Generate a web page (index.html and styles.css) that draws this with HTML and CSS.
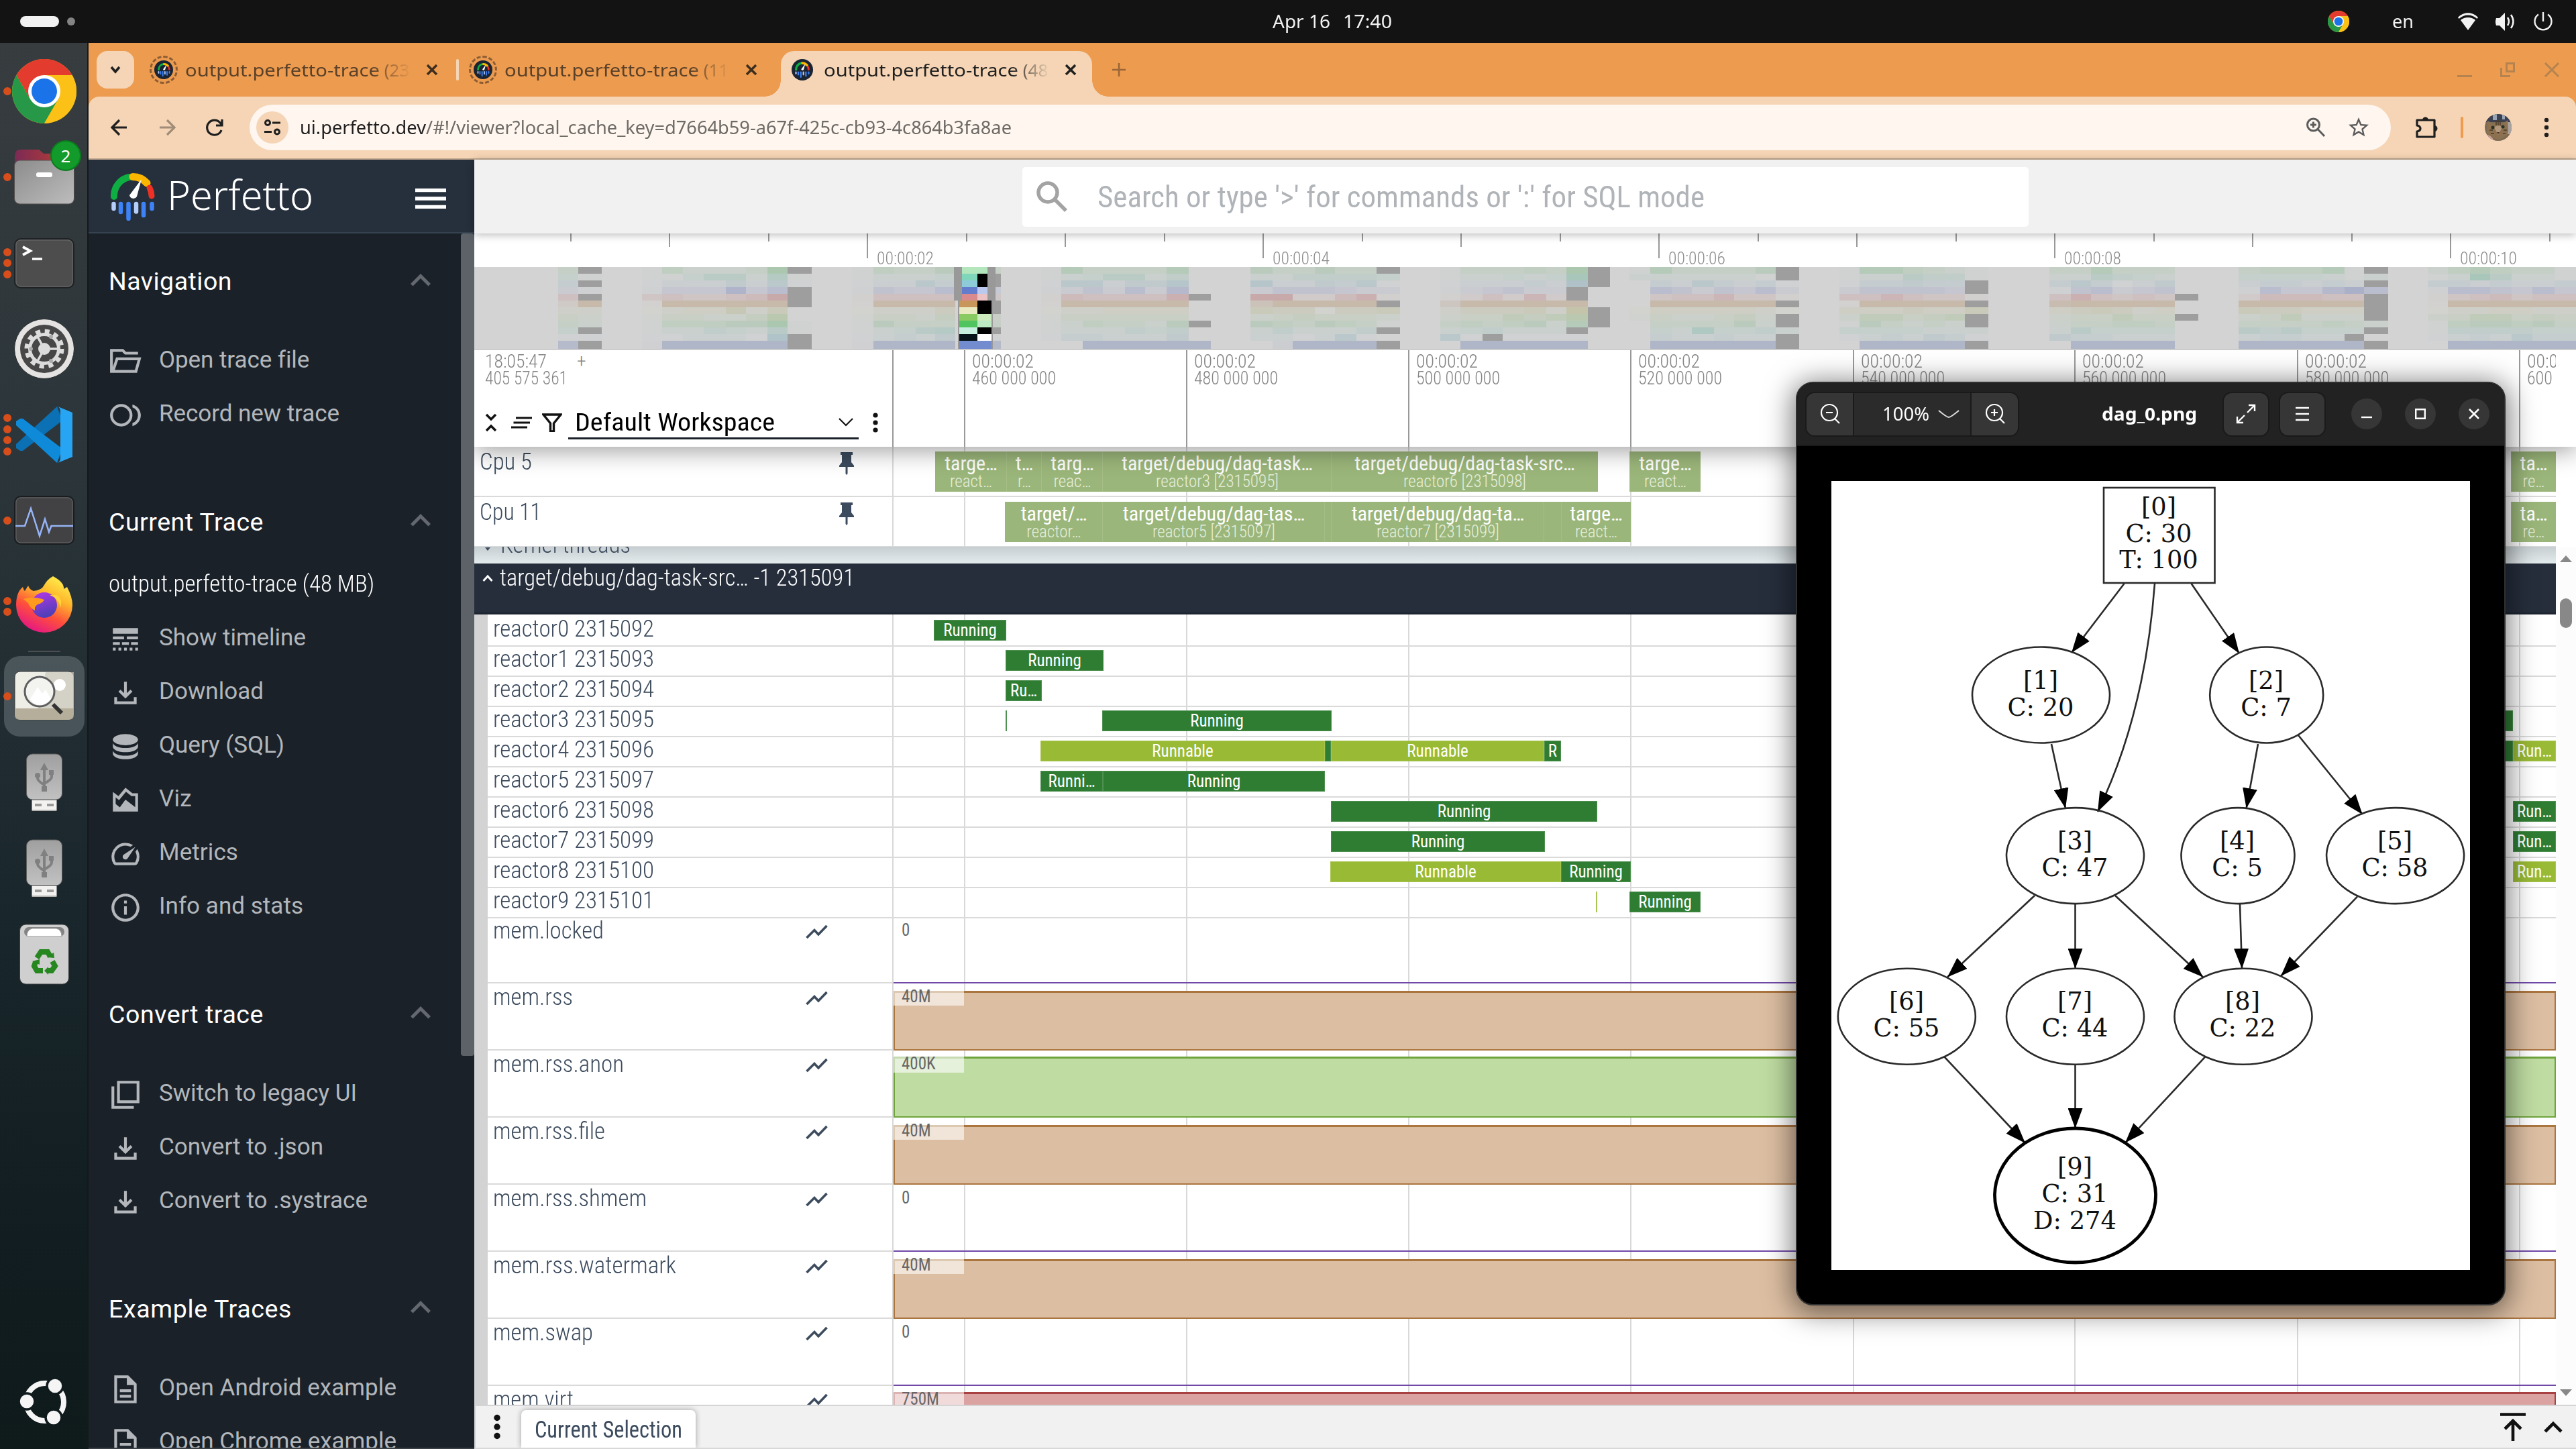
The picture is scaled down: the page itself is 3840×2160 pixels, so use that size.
FILE: index.html
```html
<!DOCTYPE html>
<html lang="en">
<head>
<meta charset="utf-8">
<title>Perfetto UI</title>
<link rel="stylesheet" href="styles.css">
</head>
<body>
<svg class="defs" width="0" height="0">
  <defs>
    <symbol id="chrome" viewBox="0 0 96 96">
      <circle cx="48" cy="48" r="48" fill="#fbc116"/>
      <path d="M48 24H89.6A48 48 0 0 0 6.4 24L27.2 60Z" fill="#e33b2e"/>
      <path d="M6.4 24L27.2 60L48 72L68.8 60L48 96A48 48 0 0 1 6.4 24Z" fill="#279847"/>
      <path d="M48 96L68.8 60L48 24H89.6A48 48 0 0 1 48 96Z" fill="#fbc116"/>
      <circle cx="48" cy="48" r="24" fill="#fff"/><circle cx="48" cy="48" r="19" fill="#1a73e8"/>
    </symbol>
    <symbol id="gauge" viewBox="0 0 66 71">
      <path d="M5 35V33A28 28 0 0 1 28 6" fill="none" stroke="#0fae43" stroke-width="10" stroke-linecap="round"/>
      <path d="M33 5.500A28 28 0 0 1 54 15" fill="none" stroke="#fdb600" stroke-width="11" stroke-linecap="round"/>
      <path d="M58 22A28 28 0 0 1 61 34" fill="none" stroke="#ee3124" stroke-width="9" stroke-linecap="round"/>
      <path d="M46 9L39 35A6 6 0 0 1 28 33Z" fill="#fff"/>
      <g stroke-width="6.500" stroke-linecap="round"><path d="M4.500 46V53M38 46V57.500" stroke="#b4cdfb"/><path d="M15 46V58M26.500 46V68M49 46V63M61.500 46V53" stroke="#3d83f7"/></g>
    </symbol>
    <symbol id="up" viewBox="0 0 24 24"><path d="M12 8l-6 6 1.410 1.410L12 10.830l4.590 4.580L18 14z"/></symbol>
    <symbol id="close" viewBox="0 0 24 24"><path d="M5 5L19 19M19 5L5 19" stroke="currentColor" stroke-width="3.400"/></symbol>
    <symbol id="folder" viewBox="0 0 24 24"><path d="M2 20V4h8l2 2h9M3 19L6 10h16l-2.500 9H3" fill="none" stroke="currentColor" stroke-width="2"/></symbol>
    <symbol id="record" viewBox="0 0 24 24"><circle cx="9" cy="12" r="7" fill="none" stroke="currentColor" stroke-width="2"/><path d="M17 4.260v2.090a5.990 5.990 0 0 1 0 11.300v2.090c3.450-.890 6-4.010 6-7.740s-2.550-6.850-6-7.740z"/></symbol>
    <symbol id="timeline" viewBox="0 0 24 24"><path d="M3 16h5v-2H3v2zm6.500 0h5v-2h-5v2zm6.500 0h5v-2h-5v2zM3 20h2v-2H3v2zm4 0h2v-2H7v2zm4 0h2v-2h-2v2zm4 0h2v-2h-2v2zm4 0h2v-2h-2v2zM3 12h8v-2H3v2zm10 0h8v-2h-8v2zM3 4v4h18V4H3z"/></symbol>
    <symbol id="download" viewBox="0 0 24 24"><path d="M18 15v3H6v-3H4v5h16v-5h-2zm-1-4-1.410-1.410L13 12.170V4h-2v8.170L8.410 9.590 7 11l5 5 5-5z"/></symbol>
    <symbol id="db" viewBox="0 0 24 24"><ellipse cx="12" cy="7" rx="9" ry="4"/><path d="M3 9v3c0 2.200 4 4 9 4s9-1.800 9-4V9c0 2.200-4 4-9 4S3 11.200 3 9zM3 14.500v2.500c0 2.200 4 4 9 4s9-1.800 9-4v-2.500c0 2.200-4 4-9 4s-9-1.800-9-4z"/></symbol>
    <symbol id="viz" viewBox="0 0 24 24"><path d="M17 7l-5-4-5 6-4-3v14h18V7h-4zm2 9.950-7-5.450L8 17l-3-2.400V10l2.440 1.830 4.960-5.950L16.300 9H19v7.950z"/></symbol>
    <symbol id="metrics" viewBox="0 0 24 24"><path d="M20.380 8.570l-1.230 1.850a8 8 0 0 1-.22 7.580H5.070A8 8 0 0 1 15.580 6.850l1.850-1.230A10 10 0 0 0 3.350 19a2 2 0 0 0 1.720 1h13.850a2 2 0 0 0 1.740-1 10 10 0 0 0-.27-10.440zm-9.790 6.840a2 2 0 0 0 2.830 0l5.660-8.490-8.490 5.660a2 2 0 0 0 0 2.830z"/></symbol>
    <symbol id="info" viewBox="0 0 24 24"><path d="M11 7h2v2h-2zm0 4h2v6h-2zm1-9C6.480 2 2 6.480 2 12s4.480 10 10 10 10-4.480 10-10S17.520 2 12 2zm0 18c-4.410 0-8-3.590-8-8s3.590-8 8-8 8 3.590 8 8-3.590 8-8 8z"/></symbol>
    <symbol id="legacy" viewBox="0 0 24 24"><path d="M4 6H2v16h16v-2H4V6zm2-4v16h16V2H6zm14 14H8V4h12v12z"/></symbol>
    <symbol id="doc" viewBox="0 0 24 24"><path d="M8 16h8v2H8zm0-4h8v2H8zm6-10H4v20h16V8l-6-6zm4 18H6V4h7v5h5v11z"/></symbol>
    <symbol id="usb" viewBox="0 0 96 96">
      <rect x="29" y="74" width="38" height="17" fill="#f3f2f1" stroke="#23292b"/><path d="M34 82h10M52 82h10" stroke="#999" stroke-width="4"/><path d="M30 90H66" stroke="#b5b3b0" stroke-width="2"/>
      <rect x="21.500" y="6" width="53" height="68" rx="9" fill="url(#usbg)" stroke="#60605f"/>
      <g fill="none" stroke="#808080" stroke-width="4"><path d="M48 28V58"/><path d="M38 38V42Q38 46 48 52M59 34V40Q59 44 48 50"/></g>
      <path d="M48 19L54 30H42Z" fill="#808080"/><circle cx="38" cy="38" r="4" fill="#808080"/><path d="M55 30h7v7h-7zM44 54h8v8h-8z" fill="#808080"/>
    </symbol>
    <linearGradient id="usbg" x2="0" y2="1"><stop stop-color="#9f9f9f"/><stop offset="1" stop-color="#c1c1c1"/></linearGradient>
    <linearGradient id="ffo" x1=".8" y1="0" x2=".3" y2="1"><stop stop-color="#fff44f"/><stop offset=".35" stop-color="#ffb52b"/><stop offset=".65" stop-color="#ff4f3c"/><stop offset="1" stop-color="#e31587"/></linearGradient>
    <linearGradient id="ffp" x2=".3" y2="1"><stop stop-color="#b636e8"/><stop offset="1" stop-color="#4f3fb8"/></linearGradient>
    <linearGradient id="files" x2="1" y2="1"><stop stop-color="#8c8c8c"/><stop offset="1" stop-color="#bdbdbd"/></linearGradient>
    <linearGradient id="filesback" x2="1"><stop stop-color="#7b2a55"/><stop offset="1" stop-color="#c3402f"/></linearGradient>
    <marker id="tip" viewBox="0 0 30 22" refX="30" refY="11" markerWidth="30" markerHeight="22" markerUnits="userSpaceOnUse" orient="auto"><path d="M0 0L30 11L0 22Z"/></marker>
  </defs>
</svg>

<header class="topbar">
  <span class="pill"></span><span class="wsdot"></span>
  <span class="clock"><span data-w="86">Apr 16</span><span data-w="73">17:40</span></span>
  <span class="tray">
    <svg width="32" height="32"><use href="#chrome"/></svg>
    <span class="lang" data-w="32">en</span>
    <svg width="32" height="32" viewBox="0 0 32 32" fill="#f2f2f2"><path d="M1 10C9 1 23 1 31 10L29.500 12C22 4.500 10 4.500 2.500 12Z"/><path d="M5 14C11 8.500 21 8.500 27 14L16 29Z"/></svg>
    <svg width="32" height="32" viewBox="0 0 32 32" fill="#f2f2f2"><path d="M2 11h5l8-8v27l-8-8H2q-2-5.500 0-11z"/><path d="M19 10q4 6 0 12M24 6q7 10 0 20" fill="none" stroke="#f2f2f2" stroke-width="2.500"/></svg>
    <svg width="32" height="32" viewBox="0 0 32 32" fill="none" stroke="#f2f2f2" stroke-width="2.400"><path d="M16 2V16M9 5.500a12.500 12.500 0 1 0 14 0"/></svg>
  </span>
</header>

<div class="desktop">
  <nav class="dock">
    <div class="app"><i class="dots"><b></b></i><svg width="96" height="96"><use href="#chrome"/></svg></div>
    <div class="app"><i class="dots"><b></b></i>
      <svg width="96" height="96" viewBox="0 0 96 96"><path d="M4 20q0-13 7-13H40l7 6H84q7 0 7 7V50H4Z" fill="url(#filesback)"/><rect x="3.500" y="23" width="89" height="65" rx="8" fill="url(#files)" stroke="#55504f"/><rect x="36" y="41" width="24" height="7" rx="3" fill="#fff"/></svg>
      <span class="badge">2</span></div>
    <div class="app"><i class="dots"><b></b><b></b><b></b></i>
      <svg width="96" height="96" viewBox="0 0 96 96"><rect x="4" y="12" width="88" height="73" rx="9" fill="#4d4d4d" stroke="#1e2224" stroke-width="2"/><rect x="6" y="14" width="84" height="69" rx="7" fill="none" stroke="#6b6b6b"/><path d="M16 24L27 30L16 36" fill="none" stroke="#fff" stroke-width="4"/><path d="M30 42H45" stroke="#fff" stroke-width="3.500"/></svg></div>
    <div class="app"><i class="dots"></i>
      <svg width="96" height="96" viewBox="0 0 96 96"><circle cx="48" cy="48" r="44.500" fill="#e4e3e2" stroke="#22282a"/><circle cx="48" cy="48" r="36" fill="#474747"/><circle cx="48" cy="48" r="26" fill="none" stroke="#dcdcdc" stroke-width="7" stroke-dasharray="7 6.610"/><circle cx="48" cy="48" r="21.500" fill="none" stroke="#dcdcdc" stroke-width="5"/><circle cx="48" cy="48" r="9" fill="#dcdcdc"/><path d="M48 48H68M48 48L38 30M48 48L38 66" stroke="#dcdcdc" stroke-width="3.500"/><g fill="#ababab"><circle cx="58" cy="30" r="3"/><circle cx="58" cy="66" r="3"/><circle cx="28" cy="48" r="3"/></g></svg></div>
    <div class="app"><i class="dots"><b></b><b></b><b></b><b></b></i>
      <svg width="96" height="96" viewBox="0 0 96 96"><path d="M67 6L6 62v6l6 4h4L75 27Z" fill="#0b70b4"/><path d="M67 90L6 34v-6l6-4h4L75 69Z" fill="#0f8ad8"/><path d="M68 6L90 15V81L68 90Q72 88 72 83V13Q72 8 68 6Z" fill="#27a5f2"/></svg></div>
    <div class="app"><i class="dots"><b></b></i>
      <svg width="96" height="96" viewBox="0 0 96 96"><rect x="4" y="12" width="88" height="71" rx="9" fill="#424244" stroke="#191d1f" stroke-width="2"/><rect x="6" y="14" width="84" height="67" rx="7" fill="none" stroke="#666"/><path d="M5 56H19L28 30L41 71L49 46L55 65L58.500 56H91" fill="none" stroke="#96b3f5" stroke-width="2.500"/></svg></div>
    <div class="app"><i class="dots"><b></b><b></b></i>
      <svg width="96" height="96" viewBox="0 0 96 96"><path d="M61 3Q78 12 77 22L82 19Q90 34 90 46A42 41 0 0 1 6 46Q6 27 16 19Q17 23 19 25L24 17Q26 23 32 25Q44 24 48 16Q52 8 61 3Z" fill="url(#ffo)"/><circle cx="48" cy="46" r="19" fill="url(#ffp)"/><path d="M17 37Q30 32 48 38Q46 43 38 45Q33 48 34 54Q26 50 24 43Z" fill="#ff9a1f"/><path d="M56 31Q70 36 72 50Q76 36 66 31Z" fill="#ffd43a"/></svg></div>
    <hr>
    <div class="app active"><i class="dots"><b></b></i>
      <svg width="96" height="96" viewBox="0 0 96 96"><rect x="4" y="11" width="88" height="72" rx="8" fill="#efeee6" stroke="#3a3a38"/><path d="M50 12H92V68L60 68L38 68Z" fill="#c9c5b8" opacity=".7"/><path d="M4 66H92V75Q92 83 84 83H12Q4 83 4 75Z" fill="#b5ae9a"/><circle cx="71" cy="31" r="9" fill="#fff"/><circle cx="41" cy="41" r="22" fill="#f3f3f0" stroke="#5f5f5f" stroke-width="3"/><path d="M27 52L38 34L45 44L50 38L58 52Q41 70 27 52Z" fill="#fff"/><path d="M61 60L74 73" stroke="#333" stroke-width="6"/></svg></div>
    <div class="app"><i class="dots"></i><svg width="96" height="96"><use href="#usb"/></svg></div>
    <div class="app"><i class="dots"></i><svg width="96" height="96"><use href="#usb"/></svg></div>
    <div class="app"><i class="dots"></i>
      <svg width="96" height="96" viewBox="0 0 96 96"><rect x="11.500" y="4" width="73" height="89" rx="9" fill="#cfcfcf" stroke="#3a3f40"/><rect x="18" y="8" width="60" height="14" rx="7" fill="#848484"/><path d="M22 22Q22 12 30 10H66Q74 12 74 22Z" fill="#fff" stroke="#999"/><g fill="none" stroke="#26861f" stroke-width="8"><path d="M37 54L43 45H53L57 52"/><path d="M35 60L33 66L37 73H46"/><path d="M52 73H59L64 66L60 59"/></g><path d="M52 53L63 54L62 46ZM30 59L41 64V56ZM54 67V79L48 73Z" fill="#26861f"/></svg></div>
    <div class="spacer"></div>
    <svg class="ubuntu" width="72" height="72" viewBox="0 0 72 72"><circle cx="38" cy="36" r="28" fill="none" stroke="#f5f5f5" stroke-width="8"/><g fill="#f5f5f5" stroke="#0f1a1c" stroke-width="3.500"><circle cx="53" cy="12" r="12"/><circle cx="11" cy="35" r="12"/><circle cx="51" cy="59" r="12"/></g></svg>
  </nav>

  <div class="browser">
    <div class="tabs">
      <button class="tabsearch"><svg width="16" height="12" viewBox="0 0 16 12"><path d="M2 2L8 9L14 2" fill="none" stroke="#1f1f1f" stroke-width="3.600"/></svg></button>
      <div class="tab"><span class="fav ring"><svg width="19" height="20"><use href="#gauge"/></svg></span><span class="title"><span data-w="290">output.perfetto-trace</span>&nbsp;(23</span><svg class="x" width="24" height="24"><use href="#close"/></svg></div>
      <i class="tabsep"></i>
      <div class="tab"><span class="fav ring"><svg width="19" height="20"><use href="#gauge"/></svg></span><span class="title"><span data-w="290">output.perfetto-trace</span>&nbsp;(11</span><svg class="x" width="24" height="24"><use href="#close"/></svg></div>
      <div class="tab current"><span class="fav"><svg width="22" height="24"><use href="#gauge"/></svg></span><span class="title"><span data-w="290">output.perfetto-trace</span>&nbsp;(48</span><svg class="x" width="24" height="24"><use href="#close"/></svg></div>
      <svg class="plus" width="22" height="22" viewBox="0 0 22 22"><path d="M11 1V21M1 11H21" stroke="#9a6636" stroke-width="2.600"/></svg>
      <svg class="winctl" width="152" height="22" viewBox="0 0 152 22" fill="none" stroke="#b48350" stroke-width="3"><path d="M0 20.500H22M65.500 8V20.500H79M73.500 1.500H84.500V13.500H73.500ZM131 1L151 21M151 1L131 21"/></svg>
    </div>
    <div class="toolbar">
      <svg width="72" height="40" viewBox="0 0 72 40" fill="none" stroke="#1f1f1f" stroke-width="3.200"><path d="M49 20H28M38 9L27 20L38 31"/></svg>
      <svg width="72" height="40" viewBox="0 0 72 40" fill="none" stroke="#a08c78" stroke-width="3.200"><path d="M26 20H47M37 9L48 20L37 31"/></svg>
      <svg width="72" height="40" viewBox="0 0 72 40" fill="none" stroke="#1f1f1f" stroke-width="3.200"><path d="M46 24A11 11 0 1 1 44 13L47 16M47 8V17H38"/></svg>
      <div class="omnibox">
        <span class="site"><svg width="28" height="24" viewBox="0 0 28 24" fill="none" stroke="#1f1f1f" stroke-width="3"><circle cx="7" cy="5" r="3.500"/><path d="M14 5H26M2 18.500H13"/><circle cx="21" cy="18.500" r="3.500"/></svg></span>
        <span class="url"><span class="host" data-w="188">ui.perfetto.dev</span><span data-w="873">/#!/viewer?local_cache_key=d7664b59-a67f-425c-cb93-4c864b3fa8ae</span></span>
        <svg width="30" height="30" viewBox="0 0 30 30" fill="none" stroke="#5c5c5c" stroke-width="3"><circle cx="11.500" cy="11" r="9"/><path d="M18 17.500L28 28M11.500 6.500V15.500M7 11H16"/></svg>
        <svg class="star" width="36" height="36" viewBox="0 0 24 24" fill="#5c5c5c"><path d="M22 9.240l-7.190-.62L12 2 9.190 8.630 2 9.240l5.460 4.730L5.820 21 12 17.270 18.180 21l-1.630-7.030L22 9.240zM12 15.400l-3.760 2.270 1-4.280-3.320-2.880 4.380-.38L12 6.100l1.710 4.040 4.380.38-3.320 2.880 1 4.280L12 15.400z"/></svg>
      </div>
      <svg class="ext" width="34" height="34" viewBox="0 0 34 34"><path d="M3 6H29V31H3V23Q8 22 8 18.500T3 14Z" fill="none" stroke="#1f1f1f" stroke-width="3.200" stroke-linejoin="round"/><path d="M11 6a4.500 4.500 0 0 1 9 0M29 14a4.500 4.500 0 0 1 0 9" fill="#1f1f1f"/></svg>
      <i class="tbsep"></i>
      <svg class="avatar" width="40" height="40" viewBox="0 0 40 40"><clipPath id="av"><circle cx="20" cy="20" r="20"/></clipPath><g clip-path="url(#av)"><rect width="40" height="40" fill="#7d6a55"/><path d="M0 0H40V12H0Z" fill="#3b4150"/><path d="M12 0h6v9h-6zM26 0h4v8h-4z" fill="#9aa4b8"/><path d="M30 12h10v18h-8z" fill="#a9a3a0"/><path d="M3 28L4 10L12 14H27L34 9L35 26Q34 34 20 38Q6 34 3 28Z" fill="#8b7150"/><path d="M14 20L20 31L26 20Q20 14 14 20Z" fill="#b3977a"/><path d="M0 30Q10 31 14 40H0Z" fill="#c9a39b"/><circle cx="12" cy="20" r="2.500" fill="#2a3325"/><circle cx="27" cy="19" r="2.500" fill="#2a3325"/><path d="M18 27h4l-2 3z" fill="#4d3327"/><path d="M17 10V17M20 9V17M23 10V17M7 24H12M28 24H33M9 29H14M27 29H31" stroke="#4b3d2b" stroke-width="1.500"/></g></svg>
      <svg class="more" width="8" height="30" viewBox="0 0 8 30" fill="#1f1f1f"><circle cx="4" cy="4" r="3.200"/><circle cx="4" cy="15" r="3.200"/><circle cx="4" cy="26" r="3.200"/></svg>
    </div>

    <div class="page">
      <aside class="sidebar">
        <div class="brand"><svg width="66" height="71"><use href="#gauge"/></svg><span class="name" data-w="218">Perfetto</span><svg class="burger" width="46" height="30" viewBox="0 0 46 30"><path d="M0 2.500H46M0 15H46M0 27.500H46" stroke="#fff" stroke-width="5.300"/></svg></div>
        <div class="menu">
          <div class="items">
            <h2 class="first"><span data-ls="184">Navigation</span><svg><use href="#up"/></svg></h2>
            <a><svg><use href="#folder"/></svg><span data-ls="223">Open trace file</span></a>
            <a><svg><use href="#record"/></svg><span data-ls="269">Record new trace</span></a>
            <h2><span data-ls="231">Current Trace</span><svg><use href="#up"/></svg></h2>
            <p><span data-w="396">output.perfetto-trace (48 MB)</span></p>
            <a><svg><use href="#timeline"/></svg><span data-ls="219">Show timeline</span></a>
            <a><svg><use href="#download"/></svg><span data-ls="156">Download</span></a>
            <a><svg><use href="#db"/></svg><span data-ls="187">Query (SQL)</span></a>
            <a><svg><use href="#viz"/></svg><span data-ls="49">Viz</span></a>
            <a><svg><use href="#metrics"/></svg><span data-ls="118">Metrics</span></a>
            <a><svg><use href="#info"/></svg><span data-ls="215">Info and stats</span></a>
            <h2><span data-ls="231">Convert trace</span><svg><use href="#up"/></svg></h2>
            <a><svg><use href="#legacy"/></svg><span data-ls="295">Switch to legacy UI</span></a>
            <a><svg><use href="#download"/></svg><span data-ls="245">Convert to .json</span></a>
            <a><svg><use href="#download"/></svg><span data-ls="311">Convert to .systrace</span></a>
            <h2><span data-ls="273">Example Traces</span><svg><use href="#up"/></svg></h2>
            <a><svg><use href="#doc"/></svg><span data-ls="354">Open Android example</span></a>
            <a><svg><use href="#doc"/></svg><span data-ls="354">Open Chrome example</span></a>
          </div>
          <i class="thumb"></i>
        </div>
      </aside>

      <main>
        <div class="search"><div class="box"><svg width="48" height="48" viewBox="0 0 48 48" fill="none" stroke="#a3a3a3" stroke-width="5.500"><circle cx="17" cy="17" r="14"/><path d="M27 27L44 44"/></svg><span data-w="905">Search or type '&gt;' for commands or ':' for SQL mode</span></div></div>
        <div class="overview"><div class="ticks" id="ticks"></div><div class="heat" id="heat"></div></div>
        <div class="axis">
          <div class="shellhead">
            <div class="origin"><span><span data-w="92">18:05:47</span><em>+</em></span><span data-w="123">405 575 361</span></div>
            <div class="controls">
              <svg width="18" height="28" viewBox="0 0 18 28" fill="none" stroke="#111" stroke-width="3.400"><path d="M2 2L9 9L16 2M2 26L9 19L16 26"/></svg>
              <svg class="lines" width="32" height="18" viewBox="0 0 32 18" stroke="#111" stroke-width="3.200"><path d="M7 2H31M3.500 9H28M0 16H24"/></svg>
              <svg class="funnel" width="30" height="28" viewBox="0 0 30 28"><path d="M2 2H28L17.500 15V27H12.500V15Z" fill="none" stroke="#111" stroke-width="3.400"/></svg>
              <span class="select"><span data-w="298">Default Workspace</span><svg width="22" height="14" viewBox="0 0 22 14"><path d="M1 2L11 12L21 2" fill="none" stroke="#111" stroke-width="2.200"/></svg></span>
              <svg class="kebab" width="8" height="30" viewBox="0 0 8 30" fill="#111"><circle cx="4" cy="4" r="3.600"/><circle cx="4" cy="15" r="3.600"/><circle cx="4" cy="26" r="3.600"/></svg>
            </div>
          </div>
          <div class="labels" id="axis"></div>
        </div>
        <div class="pinned" id="pinned"></div>
        <div class="scroller">
          <div class="tracks" id="tracks"></div>
          <div class="scrollbar"><svg width="20" height="12" viewBox="0 0 20 12"><path d="M1 11L10 1L19 11Z" fill="#888"/></svg><i></i><svg width="20" height="12" viewBox="0 0 20 12"><path d="M1 1L10 11L19 1Z" fill="#888"/></svg></div>
        </div>
        <div class="drawer">
          <svg width="10" height="38" viewBox="0 0 10 38" fill="#111"><circle cx="5" cy="5.500" r="4.700"/><circle cx="5" cy="19" r="4.700"/><circle cx="5" cy="32.500" r="4.700"/></svg>
          <span class="dtab"><span data-w="220">Current Selection</span></span>
          <svg class="totop" width="38" height="42" viewBox="0 0 38 42" fill="none" stroke="#111" stroke-width="4.600"><path d="M0 2.500H38M19 42V13M7 24L19 12L31 24"/></svg>
          <svg width="28" height="18" viewBox="0 0 28 18"><path d="M2 16L14 4L26 16" fill="none" stroke="#111" stroke-width="4.600"/></svg>
        </div>
      </main>
    </div>
  </div>
</div>

<section class="viewer">
  <div class="vhead">
    <div class="zoomgroup">
      <span class="zb"><svg width="32" height="32" viewBox="0 0 32 32" fill="none" stroke="#fff" stroke-width="2.200"><circle cx="15" cy="14" r="12"/><path d="M23 23L30 30M10 14H20"/></svg></span>
      <span class="pct"><span data-w="70">100%</span><svg width="32" height="14" viewBox="0 0 32 14"><path d="M1 2Q13 12 16 12T31 2" fill="none" stroke="#ddd" stroke-width="2"/></svg></span>
      <span class="zb"><svg width="32" height="32" viewBox="0 0 32 32" fill="none" stroke="#fff" stroke-width="2.200"><circle cx="15" cy="14" r="12"/><path d="M23 23L30 30M10 14H20M15 9V19"/></svg></span>
    </div>
    <span class="vtitle"><span data-w="142">dag_0.png</span></span>
    <span class="vb"><svg width="30" height="30" viewBox="0 0 30 30" fill="none" stroke="#fff" stroke-width="2.400"><path d="M17 13L28 2M19 2H28V11M13 17L2 28M2 19V28H11"/></svg></span>
    <span class="vb"><svg width="22" height="22" viewBox="0 0 22 22" stroke="#fff" stroke-width="2.600"><path d="M1 2H21M1 11H21M1 20H21"/></svg></span>
    <span class="vc first"><svg width="16" height="16" viewBox="0 0 16 16" stroke="#fff" stroke-width="2.400"><path d="M0 13H16"/></svg></span>
    <span class="vc"><svg width="16" height="16" viewBox="0 0 16 16" fill="none" stroke="#fff" stroke-width="2.400"><path d="M1.200 1.200H14.800V14.800H1.200Z"/></svg></span>
    <span class="vc"><svg width="18" height="18" viewBox="0 0 18 18" stroke="#fff" stroke-width="2.600"><path d="M2 2L16 16M16 2L2 16"/></svg></span>
  </div>
  <svg class="dag" width="952" height="1176" viewBox="2730 717 952 1176">
    <g fill="none" stroke="#2a2a2a" stroke-width="2.600" id="edges">
      <path d="M3166.500 870L3088 973"/><path d="M3266.600 870L3338 974"/><path d="M3212 870C3206 950 3190 1080 3127 1210"/>
      <path d="M3058 1109L3079 1205"/><path d="M3366 1109L3348.600 1205"/><path d="M3426 1096L3521.700 1214"/>
      <path d="M3033 1335L2903 1456.500"/><path d="M3093.500 1347V1444"/><path d="M3153 1335L3284 1456.500"/><path d="M3339 1348L3342 1444"/><path d="M3514 1336.600L3400 1455"/>
      <path d="M2898.600 1575.600L3019 1704"/><path d="M3093.500 1587V1682"/><path d="M3287 1575.600L3168 1703.600"/>
    </g>
    <g fill="none" stroke="#2a2a2a" stroke-width="2.600">
      <rect x="3136" y="727" width="165.500" height="142"/>
      <ellipse cx="3042.500" cy="1036" rx="102.500" ry="71.500"/><ellipse cx="3378.700" cy="1036" rx="84.500" ry="71.500"/>
      <ellipse cx="3093.500" cy="1275.600" rx="102.500" ry="71.500"/><ellipse cx="3336" cy="1275.600" rx="84.500" ry="71.500"/><ellipse cx="3570.600" cy="1275.600" rx="102.500" ry="71.500"/>
      <ellipse cx="2842.300" cy="1515.300" rx="102.500" ry="71.500"/><ellipse cx="3093.500" cy="1515.300" rx="102.500" ry="71.500"/><ellipse cx="3344" cy="1515.300" rx="102.500" ry="71.500"/>
      <ellipse cx="3093.500" cy="1782" rx="120" ry="100" stroke="#000" stroke-width="4.800"/>
    </g>
    <g class="nodes">
      <text x="3218" y="767.500">[0]</text><text x="3218" y="807.500">C: 30</text><text x="3218" y="847">T: 100</text>
      <text x="3042" y="1026.500">[1]</text><text x="3042" y="1066.500">C: 20</text><text x="3378" y="1026.500">[2]</text><text x="3378" y="1066.500">C: 7</text>
      <text x="3093" y="1266">[3]</text><text x="3093" y="1306">C: 47</text><text x="3335" y="1266">[4]</text><text x="3335" y="1306">C: 5</text><text x="3570" y="1266">[5]</text><text x="3570" y="1306">C: 58</text>
      <text x="2842" y="1505">[6]</text><text x="2842" y="1545">C: 55</text><text x="3093" y="1505">[7]</text><text x="3093" y="1545">C: 44</text><text x="3343" y="1505">[8]</text><text x="3343" y="1545">C: 22</text>
      <text x="3093" y="1752">[9]</text><text x="3093" y="1792">C: 31</text><text x="3093" y="1831.500">D: 274</text>
    </g>
  </svg>
</section>
<script src="app.js"></script>
</body>
</html>
```
FILE: styles.css
```css
* { box-sizing: border-box; }
html, body { margin: 0; width: 3840px; height: 2160px; overflow: hidden; }
body { display: flex; flex-direction: column; font-family: "Roboto Condensed", Roboto, "Liberation Sans", sans-serif; font-stretch: 75%; background: #131313; }
svg { flex: none; display: block; }
.defs { position: absolute; }
[data-w], [data-ls] { display: inline-block; white-space: nowrap; flex: none; }
[data-w] { transform-origin: 0 50%; }

/* desktop top bar */
.topbar { height: 64px; flex: none; background: #131313; display: flex; align-items: center; padding: 0 33px 0 30px; color: #f2f2f2; font: 27px/64px "Noto Sans", sans-serif; }
.pill { width: 58px; height: 16px; border-radius: 8px; background: #f2f2f2; }
.wsdot { width: 12px; height: 12px; border-radius: 6px; background: #848484; margin-left: 12px; }
.clock { margin-left: 1785px; display: flex; gap: 19px; flex: 1; }
.tray { display: flex; align-items: center; }
.tray .lang { margin: 0 65px 0 64px; }
.tray svg + svg { margin-left: 24px; }

.desktop { flex: 1; display: flex; min-height: 0; }
.dock { width: 132px; flex: none; display: flex; flex-direction: column; padding-top: 8px; border-right: 2px solid #14191b; background: linear-gradient(#373c3f, #2b353a 30%, #19262b 62%, #111d20 85%, #0f1a1b); }
.app { height: 128px; flex: none; display: flex; align-items: center; position: relative; }
.dots { width: 12px; margin: 0 1px 0 5px; display: flex; flex-direction: column; gap: 4.500px; flex: none; }
.dots b { width: 12px; height: 12px; border-radius: 6px; background: #d84e1b; }
.badge { position: absolute; left: 75px; top: 9px; width: 46px; height: 46px; border-radius: 23px; background: #129a2a; border: 2px solid #0c7a1f; color: #fff; font: 26px/42px "Noto Sans", sans-serif; text-align: center; }
.active::before { content: ""; position: absolute; left: 6px; top: 4px; width: 120px; height: 120px; border-radius: 24px; background: rgba(140, 150, 156, .38); }
.active > * { position: relative; }
.dock hr { width: 48px; height: 2px; border: 0; margin: 2px 0 2px 42px; background: #4b4f50; flex: none; }
.spacer { flex: 1; }
.ubuntu { margin: 0 0 34px 29px; }

/* browser frame */
.browser { flex: 1; display: flex; flex-direction: column; min-width: 0; background: #ec9b4f; }
.tabs { height: 80px; flex: none; display: flex; align-items: center; padding-left: 12px; font: 26px/40px "Noto Sans", sans-serif; color: #5b4129; }
.tabsearch { width: 56px; height: 56px; border: 0; padding: 0; border-radius: 16px; background: #f5d5b5; display: grid; place-items: center; margin-right: 20px; }
.tab { width: 464px; height: 68px; align-self: flex-end; display: flex; align-items: center; padding: 0 0 12px; position: relative; flex: none; }
.fav { width: 32px; height: 32px; border-radius: 16px; background: #1b2433; display: grid; place-items: center; margin: 0 16px; flex: none; }
.fav.ring { width: 28px; height: 28px; border-radius: 14px; margin: 0 18px 0 10px; outline: 3px dashed #8b5c34; outline-offset: 4px; }
.title { width: 340px; overflow: hidden; white-space: nowrap; mask-image: linear-gradient(90deg, #000 82%, transparent 99%); }
.x { color: #3c2c1e; margin-left: 16px; }
.tabsep { width: 4px; height: 32px; border-radius: 2px; background: #f5d5b5; margin: 0 12px 0 -4px; }
.current { background: #f5d5b5; border-radius: 20px 20px 0 0; color: #1f1f1f; margin-left: 4px; }
.current::before, .current::after { content: ""; position: absolute; bottom: 0; width: 24px; height: 24px; background: radial-gradient(circle at 0 0, transparent 23.500px, #f5d5b5 24px); }
.current::before { left: -24px; }
.current::after { right: -24px; background: radial-gradient(circle at 100% 0, transparent 23.500px, #f5d5b5 24px); }
.current .x { color: #1f1f1f; }
.plus { margin-left: 29px; }
.winctl { margin: 0 25px 0 auto; }
.toolbar { height: 94px; flex: none; display: flex; align-items: center; background: #f5d5b5; border-bottom: 2px solid #bfa78e; border-radius: 16px 16px 0 0; padding-left: 8px; }
.omnibox { margin-left: 16px; width: 3192px; height: 68px; border-radius: 34px; background: #fef6ef; display: flex; align-items: center; padding: 0 30px 0 10px; }
.site { width: 48px; height: 48px; border-radius: 24px; background: #f5d5b5; display: grid; place-items: center; }
.url { flex: 1; margin-left: 17px; font: 27px/48px "Noto Sans", sans-serif; color: #6e6a66; display: flex; }
.url .host { color: #1f1f1f; }
.star { margin-left: 31px; }
.ext { margin-left: 36px; }
.tbsep { width: 4px; height: 32px; border-radius: 2px; background: #ec9b4f; margin: 0 32px 0 34px; }
.more { margin-left: 48px; }

/* perfetto page */
.page { flex: 1; display: flex; min-height: 0; background: #fff; }
.sidebar { width: 575px; flex: none; display: flex; flex-direction: column; background: #1a2129; color: #b3b7bb; font-family: Roboto, sans-serif; font-stretch: 100%; border-bottom: 2px solid #3a3f46; }
.brand { height: 110px; flex: none; background: #262f3c; border-bottom: 2px solid #364250; display: flex; align-items: center; padding: 2px 0 0 33px; color: #fff; }
.name { font: 300 60px/100px "Noto Sans", "Open Sans", sans-serif; margin: -6px 0 0 18px; }
.burger { margin: 5px 42px 0 auto; }
.menu { flex: 1; min-height: 0; display: flex; }
.items { flex: 1; overflow: hidden; }
.thumb { width: 20px; height: 1226px; background: #5d6269; border-radius: 4px; }
.sidebar h2 { margin: 0; height: 199px; padding: 41px 30px 0 30px; font-size: 37.500px; line-height: 160px; font-weight: 400; color: #fff; display: flex; align-items: flex-start; justify-content: space-between; }
.sidebar h2.first { height: 149px; padding-top: 0; line-height: 142px; }
.sidebar h2 svg { width: 60px; height: 60px; fill: #646970; margin-top: 48px; }
.sidebar h2.first svg { margin-top: 40px; }
.sidebar a { height: 80px; display: flex; align-items: center; font-size: 35px; line-height: 80px; padding-left: 30px; fill: currentColor; }
.sidebar a svg { width: 50px; height: 50px; margin: 4px 25px 0 0; }
.sidebar a span { height: 80px; }
.sidebar p { margin: 0; height: 55px; padding-left: 30px; color: #fff; font: 35px/30px "Roboto Condensed", Roboto, sans-serif; font-stretch: 75%; font-weight: 300; }

main { flex: 1; display: flex; flex-direction: column; min-width: 0; }
.search { height: 110px; flex: none; background: #f1f1f1; padding: 11px 0 0 817px; box-shadow: 0 2px 12px rgba(0, 0, 0, .28); position: relative; z-index: 2; }
.box { width: 1500px; height: 89px; border-radius: 5px; background: #fff; display: flex; align-items: center; padding-left: 21px; font-size: 45px; color: #b0b4b8; }
.box span { margin-left: 43px; }
.overview { height: 174px; flex: none; position: relative; border-bottom: 2px solid #ccc; overflow: hidden; }
.ticks { height: 50px; position: relative; }
.ticks i { position: absolute; top: 0; width: 2px; background: #999; }
.ticks span { position: absolute; top: 26px; font-size: 25px; line-height: 24px; color: #8d8d8d; font-weight: 300; }
.heat { height: 122px; background: #d3d3d3; position: relative; }
.heat i { position: absolute; height: 10px; }
.heat i.last { height: 12px; }
.heat .handle { background: #999; height: 50px; width: 12px; top: 0; }
.heat .edge { background: #999; height: 124px; width: 2px; top: 0; }
.axis { height: 144px; flex: none; display: flex; background: #fff; position: relative; z-index: 1; box-shadow: 0 6px 34px rgba(0, 0, 0, .38); clip-path: inset(0 0 -60px 0); }
.shellhead { width: 625px; border-right: 2px solid #999; display: flex; flex-direction: column; }
.origin { padding: 4px 0 0 16px; height: 83px; display: flex; flex-direction: column; font-size: 27.500px; line-height: 25px; font-weight: 300; color: #848484; align-items: flex-start; }
.origin em { font-style: normal; margin-left: 45px; }
.controls { display: flex; align-items: center; height: 50px; padding-left: 16px; }
.lines { margin-left: 21px; }
.funnel { margin-left: 14px; }
.select { width: 433px; height: 50px; margin-left: 9px; border-bottom: 3px solid #1a2129; padding: 0 8px 0 10px; display: flex; justify-content: space-between; align-items: center; font-size: 37.500px; line-height: 46px; color: #000; }
.kebab { margin-left: 21px; }
.labels { flex: 1; position: relative; overflow: hidden; margin-right: 30px; }
.labels div { position: absolute; top: 0; bottom: 0; border-left: 2px solid #999; padding: 4px 0 0 10px; font-size: 27.500px; line-height: 25px; font-weight: 300; color: #848484; display: flex; flex-direction: column; align-items: flex-start; }

.pinned { height: 149px; flex: none; position: relative; overflow: hidden; margin-right: 30px; }
.row { display: flex; border-bottom: 2.500px solid #dadada; position: relative; }
.row .label { width: 624px; flex: none; font-size: 35px; font-weight: 300; color: #3c4b5d; display: flex; justify-content: space-between; }
.row .lane { flex: 1; position: relative; }
.pinned .row { height: 75px; }
.pinned .label { padding: 3px 58px 0 8px; line-height: 39px; }
.pinned .label svg { margin-top: 5px; }
.gridline { position: absolute; top: 0; bottom: 0; width: 2px; background: #d9d9d9; }
.slice { position: absolute; top: 7px; height: 60px; background: #9bb67a; color: #fff; text-align: center; overflow: hidden; white-space: nowrap; }
.slice + .slice { box-shadow: -1px 0 #a5bd87; }
.slice b { display: block; font-size: 30px; line-height: 35px; font-weight: 400; }
.slice small { display: block; font-size: 25px; line-height: 20px; font-weight: 300; color: #e6eedd; }

.scroller { flex: 1; display: flex; min-height: 0; }
.tracks { flex: 1; position: relative; overflow: hidden; }
.kernel { height: 25px; background: linear-gradient(#c6ced1, #e4ebed); color: #3c4b5d; font-size: 35px; line-height: 38px; font-weight: 300; padding-left: 39px; position: relative; overflow: hidden; }
.kernel > span { margin-top: -21px; display: block; }
.kernel svg { position: absolute; left: 15px; top: 0; }
.group { height: 76px; background: #262e3c; color: #fff; font-size: 35px; line-height: 43px; font-weight: 300; padding-left: 12px; position: relative; display: flex; border-bottom: 3px solid #1e2531; }
.group svg { margin: 16px 10px 0 0; }
.body { border-left: 20px solid #d3d3d3; padding-top: 3px; position: relative; }
.body .label { width: 604px; padding-left: 8px; }
.thread { height: 45px; }
.thread .label { line-height: 37px; }
.bar { position: absolute; top: 4.500px; height: 31px; color: #fff; font-size: 25px; line-height: 31px; text-align: center; overflow: hidden; white-space: nowrap; background: #2f7d32; box-shadow: inset 0 0 0 1px rgba(255, 255, 255, .15); }
.bar.runnable { background: #99ba34; }
.counter { height: 100px; }
.counter.first { height: 97px; }
.counter .label { line-height: 37px; padding: 2px 97px 0 8px; }
.counter .label svg { margin-top: 9px; }
.counter.first .label { padding-top: 0; }
.area { position: absolute; left: 1px; right: 0; bottom: -2px; border: 2px solid; border-top-width: 3px; }
.zero { position: absolute; left: 1px; right: 0; bottom: -2px; height: 2.500px; background: #7049a8; }
.max { position: absolute; left: 1px; top: 9px; width: 105px; height: 24px; padding-left: 12px; background: rgba(255, 255, 255, .6); font-size: 25px; line-height: 22px; color: #666; }
.counter.first .max { top: 7px; }
.scrollbar { width: 30px; background: #fcfcfc; display: flex; flex-direction: column; align-items: center; padding: 12px 0; }
.scrollbar i { width: 18px; height: 44px; border-radius: 9px; background: #888; margin: 53px 0 auto; }

.drawer { height: 66px; flex: none; background: #f1f1f1; border-top: 2px solid #d4d4d4; border-left: 2px solid #d4d4d4; border-bottom: 2px solid #d8d8d8; display: flex; align-items: center; padding: 0 20px 0 27px; }
.dtab { align-self: flex-end; width: 260px; height: 56px; margin: 0 auto 0 31px; background: #fff; border-radius: 7px 7px 0 0; box-shadow: 0 0 8px rgba(0, 0, 0, .35); font-size: 35px; line-height: 59px; color: #3c4b5d; padding-left: 20px; clip-path: inset(-8px -8px 0 -8px); }
.totop { margin-right: 27px; }

/* floating image viewer */
.viewer { position: absolute; z-index: 5; left: 2677px; top: 569px; width: 1058px; height: 1377px; border-radius: 26px; background: #000; border: 2px solid #303030; box-shadow: 0 6px 40px 6px rgba(0, 0, 0, .5); }
.vhead { height: 94px; background: #222; border-radius: 24px 24px 0 0; border-bottom: 2px solid #1a1a1a; display: flex; align-items: center; padding: 0 22px 0 12px; font: 27px/60px "Noto Sans", sans-serif; color: #fff; }
.zoomgroup { display: flex; height: 67px; border: 2px solid #1a1a1a; border-radius: 14px; overflow: hidden; background: #2b2b2b; width: 319px; }
.zb { width: 69px; background: #363636; display: grid; place-items: center; }
.pct { flex: 1; display: flex; align-items: center; justify-content: flex-end; gap: 13px; padding-right: 16px; border: solid #1a1a1a; border-width: 0 2px; }
.vtitle { font-weight: 700; margin: 0 38px 0 auto; }
.vb { width: 70px; height: 67px; border-radius: 14px; background: #363636; border: 2px solid #1a1a1a; display: grid; place-items: center; margin-right: 14px; }
.vc { width: 46px; height: 46px; border-radius: 23px; background: #363636; display: grid; place-items: center; margin-left: 34px; flex: none; }
.vc.first { margin-left: 24px; }
.dag { background: #fff; margin: 52px 0 0 51px; }
.nodes { font: 36.800px "DejaVu Serif", serif; text-anchor: middle; fill: #111; }
#edges path { marker-end: url(#tip); }
```
FILE: app.js
```js
const T0 = 1332;      // left edge of the timeline
const MAIN = 707;     // left edge of the main pane
const $ = id => document.getElementById(id);

// Overview ruler
let html = '';
for (let i = 1; i <= 21; i++) {
  const x = 703 + i * 147.500 - MAIN;
  const h = i % 4 === 0 ? 37 : i % 2 === 0 ? 20 : 12;
  html += `<i style="left:${x - 1}px;height:${h}px"></i>`;
  if (i % 4 === 0) html += `<span style="left:${x + 14}px" data-w="85">00:00:${String(i / 2).padStart(2, '0')}</span>`;
}
$('ticks').innerHTML = html;

// CPU usage overview: digits are load levels, x marks a saturated cell
const HUES = ['#a9c6ad', '#a9c6bb', '#a9bfc6', '#a9aec8', '#c8a9aa', '#c6b8a9', '#c3c3a9', '#b5c6a9', '#a9c6ad', '#a9c6bf', '#a9c0c6', '#afb6c8'];
const BURSTS = [
  [[832, 862, 897], '3x 31 3x 21 4x 38 22 32 32 3x 11 7x'],
  [[957, 987, 1018, 1049, 1082, 1112, 1144, 1174, 1210], '1422238x 11355261 12224251 1333735x 3433459x 1888888x 12336250 13322470 14445581 12243251 1122217x 1999999x'],
  [[1270, 1302, 1333, 1365, 1394, 1424], '14335 12223 12253 14335 14444 18888 12224 13324 15333 12356 12324 19999'],
  [[1552, 1582, 1614, 1644, 1677, 1707, 1739, 1772, 1805], '16333360 12355240 15524460 12425260 1544447x 18888880 12233330 13333330 1243325x 12224340 13322240 00999999'],
  [[1864, 1897, 1927, 1960, 1990, 2022, 2052, 2087], '533533x 2244443 6224351 2444322 9922571 588888x 5441445 2343332 5435431 242224x 221251 029999x'],
  [[2147, 2177, 2210, 2240, 2272, 2305, 2335, 2367, 2400], '1333438x 1223239x 1222327x 123422x0 124262x0 48888880 2444528x 2335457x 3434526x 234222x0 51x11110 09999990'],
  [[2429, 2460, 2492, 2522, 2555, 2585, 2617, 2647, 2682], '1633335x 2222221x 03253231 05424352 03446331 0888888x 13333321 1322342x 0333352x 03273342 0322322x 0999999x'],
  [[2742, 2772, 2804, 2837, 2867, 2899, 2929, 2964], '1664321 1225441 133433x 244443x 4464331 188888x 3334335 255345x 153232x 3333222 1232431 099999x'],
  [[3055, 3087, 3117, 3149, 3179, 3212, 3242, 3277], '3363330 2254320 3531240 1452340 474343x 7888880 3454230 233533x 2334430 2533330 4332220 0999990'],
  [[3337, 3369, 3400, 3431, 3462, 3495, 3524, 3560], '344461x 3333212 233232x 1533685 255544x 888888x 544333x 235222x 3333432 545333x 23322x0 999999x'],
  [[3619, 3649, 3682, 3712, 3744, 3775, 3808, 3840], '2464331 1295221 3323223 1554353 1345344 1888888 1223322 2355343 1455453 1444433 1232533 0999999']
];
html = '';
const cell = (x, x2, r, c, o = 1) => `<i class="${r === 11 ? 'last' : ''}" style="left:${x - MAIN}px;width:${x2 - x}px;top:${r * 10}px;background:${c};opacity:${o}"></i>`;
for (const [xs, rows] of BURSTS) {
  rows.split(' ').forEach((row, r) => [...row].forEach((v, c) => {
    if (v === '0' || xs[c + 1] === undefined) return;
    html += v === 'x' ? cell(xs[c], xs[c + 1], r, '#9e9e9e') : cell(xs[c], xs[c + 1], r, HUES[r], Math.min(1, (v - .3) / 8).toFixed(2));
  }));
}
const SEL_A = ['#b3e6bc', '#80d6ba', '#8ecbd8', '#637dcc', '#d98a8c', '#c8955a', '#e8e9c1', '#8aca62', '#50c45f', '#c8eee0', '#081419', '#738cd0'];
const SEL_B = ['#b3e6bc', '#000', '#000', '#bcc9ee', '#ebc3c4', '#000', '#000', '#cbeabd', '#bde9c3', '#000', '#fff', '#738cd0'];
const TAIL = ['#c6d0c6', '#9e9e9e', '#9e9e9e', '#c6c8d2', '#cfc6c8', '#9e9e9e', '#9e9e9e', '#c9cfc6', '#c6cfc7', '#9e9e9e', '#cfd0d1', '#b4bac9'];
for (let r = 0; r < 12; r++) html += cell(1430, 1457, r, SEL_A[r]) + cell(1457, 1478, r, SEL_B[r]) + cell(1479, 1492, r, TAIL[r]);
html += `<i class="handle" style="left:${1422 - MAIN}px"></i><i class="handle" style="left:${1472 - MAIN}px"></i><i class="edge" style="left:${1428 - MAIN}px"></i><i class="edge" style="left:${1478 - MAIN}px"></i>`;
$('heat').innerHTML = html;

// Time axis
const GRID = [1438, 1769, 2100, 2431, 2763, 3093, 3425, 3756];
$('axis').innerHTML = GRID.map((x, i) => `<div style="left:${x - 1 - T0}px"><span data-w="92">00:00:02</span><span data-w="125">${460 + i * 20} 000 000</span></div>`).join('');
const lines = [T0 - 1, ...GRID].map(x => `<i class="gridline" style="left:${x - 1 - MAIN}px"></i>`).join('');
const bodyLines = [T0 - 1, ...GRID].map(x => `<i class="gridline" style="left:${x - 1 - MAIN - 20}px"></i>`).join('');

// Pinned CPU tracks: [start, end, title, subtitle]
const CPUS = [
  ['Cpu 5', 78, [[1394, 1501, 'targe…', 'react…'], [1501, 1553, 't…', 'r…'], [1553, 1644, 'targ…', 'reac…'], [1644, 1985, 'target/debug/dag-task…', 'reactor3 [2315095]'], [1985, 2382, 'target/debug/dag-task-src…', 'reactor6 [2315098]'], [2430, 2535, 'targe…', 'react…'], [3744, 3810, 'ta…', 're…']]],
  ['Cpu 11', 92, [[1498, 1644, 'target/…', 'reactor…'], [1644, 1975, 'target/debug/dag-tas…', 'reactor5 [2315097]'], [1975, 1985, '', ''], [1985, 2302, 'target/debug/dag-ta…', 'reactor7 [2315099]'], [2302, 2328, '', ''], [2328, 2431, 'targe…', 'react…'], [3744, 3810, 'ta…', 're…']]]
];
const PIN = '<svg width="22" height="34" viewBox="0 0 22 34" fill="#3c4b5d"><path d="M2 0H20V4H18V15L22 20V22H12.500V32L11 34L9.500 32V22H0V20L4 15V4H2Z"/></svg>';
$('pinned').innerHTML = lines + CPUS.map(([name, w, sl]) => `<div class="row"><div class="label"><span data-w="${w}">${name}</span>${PIN}</div><div class="lane">${
  sl.map(([a, b, t, s]) => `<div class="slice" style="left:${a - T0 + 1}px;width:${b - a}px"><b>${t}</b><small>${s}</small></div>`).join('')}</div></div>`).join('');

// Thread state tracks: [start, end, label, runnable]
const R = 'Running', N = 'Runnable';
const THREADS = [
  [[1392, 1500, R]],
  [[1499, 1645, R]],
  [[1499, 1553, 'Ru…']],
  [[1499, 1501, ''], [1643, 1985, R], [3700, 3746, '']],
  [[1551, 1975, N, 1], [1975, 1984, ''], [1984, 2302, N, 1], [2302, 2327, 'R'], [3700, 3746, ''], [3746, 3810, 'Run…', 1]],
  [[1551, 1644, 'Runni…'], [1644, 1975, R]],
  [[1984, 2381, R], [3746, 3810, 'Run…']],
  [[1984, 2303, R], [3746, 3810, 'Run…']],
  [[1983, 2327, N, 1], [2327, 2431, R], [3746, 3810, 'Run…', 1]],
  [[2379, 2381, '', 1], [2429, 2535, R]]
];
const COUNTERS = [
  ['mem.locked', 165, '0'],
  ['mem.rss', 119, '40M', 11, '#dcbea2', '#ab7540'],
  ['mem.rss.anon', 195, '400K', 9, '#bfdca2', '#6fa43c'],
  ['mem.rss.file', 167, '40M', 11, '#dcbea2', '#ab7540'],
  ['mem.rss.shmem', 229, '0'],
  ['mem.rss.watermark', 273, '40M', 11, '#dcbea2', '#ab7540'],
  ['mem.swap', 149, '0'],
  ['mem.virt', 120, '750M', 9, '#dba2a2', '#a84242']
];
const TREND = '<svg width="33" height="22" viewBox="0 0 33 22"><path d="M1.500 20L13 8.500L19 15L31.500 2" fill="none" stroke="#3c4b5d" stroke-width="3.600"/></svg>';
$('tracks').innerHTML =
  `<div class="kernel"><span><span data-w="194">Kernel threads</span></span><svg width="10" height="7" viewBox="0 0 10 7"><path d="M1 1L5 6L9 1" fill="#3c4b5d"/></svg></div>` +
  `<div class="group"><svg width="16" height="12" viewBox="0 0 16 12"><path d="M1.500 10L8 3L14.500 10" fill="none" stroke="#fff" stroke-width="3"/></svg><span data-w="529">target/debug/dag-task-src… -1 2315091</span></div>` +
  `<div class="body">${bodyLines}` +
  THREADS.map((bars, i) => `<div class="row thread"><div class="label"><span data-w="240">reactor${i} ${2315092 + i}</span></div><div class="lane">${
    bars.map(([a, b, t, n]) => `<div class="bar${n ? ' runnable' : ''}" style="left:${a - T0 + 1}px;width:${b - a}px">${t}</div>`).join('')}</div></div>`).join('') +
  COUNTERS.map(([name, w, max, top, fill, edge], i) => `<div class="row counter${i ? '' : ' first'}"><div class="label"><span data-w="${w}">${name}</span>${TREND}</div><div class="lane">${
    fill ? `<div class="area" style="top:${top}px;background:${fill};border-color:${edge}"></div>` : '<div class="zero"></div>'}<span class="max">${max}</span></div></div>`).join('') + '</div>';

// Set each measured label to its column width
for (const el of document.querySelectorAll('[data-w]')) {
  const n = el.getBoundingClientRect().width, w = +el.dataset.w;
  el.style.transform = `scaleX(${w / n})`;
  el.style.marginRight = `${parseFloat(getComputedStyle(el).marginRight) + w - n}px`;
}
for (const el of document.querySelectorAll('[data-ls]')) {
  const n = el.getBoundingClientRect().width;
  el.style.letterSpacing = `${(el.dataset.ls - n) / el.textContent.length}px`;
}
```
